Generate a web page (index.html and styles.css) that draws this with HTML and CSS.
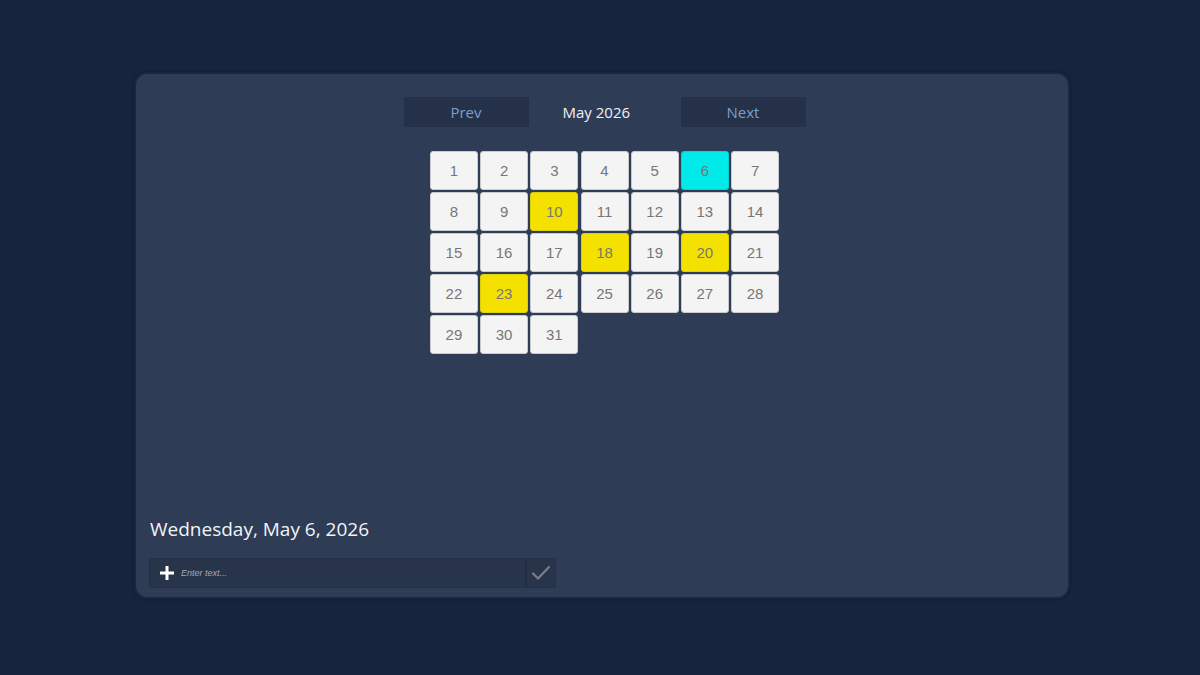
FILE: index.html
```html
<!DOCTYPE html>
<html>
<head>
<meta charset="utf-8">
<link rel="stylesheet" href="styles.css">
</head>
<body>
<div class="card">
  <div class="top">
    <div class="nav">
      <button class="nav-btn">Prev</button>
      <div class="title">May 2026</div>
      <button class="nav-btn">Next</button>
    </div>
    <div class="grid">
      <div class="cell">1</div><div class="cell">2</div><div class="cell">3</div><div class="cell">4</div><div class="cell">5</div><div class="cell today">6</div><div class="cell">7</div>
      <div class="cell">8</div><div class="cell">9</div><div class="cell mark">10</div><div class="cell">11</div><div class="cell">12</div><div class="cell">13</div><div class="cell">14</div>
      <div class="cell">15</div><div class="cell">16</div><div class="cell">17</div><div class="cell mark">18</div><div class="cell">19</div><div class="cell mark">20</div><div class="cell">21</div>
      <div class="cell">22</div><div class="cell mark">23</div><div class="cell">24</div><div class="cell">25</div><div class="cell">26</div><div class="cell">27</div><div class="cell">28</div>
      <div class="cell">29</div><div class="cell">30</div><div class="cell">31</div>
    </div>
  </div>
  <div class="bottom">
    <h2 class="date">Wednesday, May 6, 2026</h2>
    <div class="entry">
      <div class="field">
        <svg class="plus" width="16" height="16" viewBox="0 0 16 16"><path d="M8 1v14M1 8h14" stroke="#fff" stroke-width="3"/></svg>
        <span class="placeholder">Enter text...</span>
      </div>
      <div class="ok">
        <svg width="20" height="16" viewBox="0 0 20 16"><path d="M2 8.5l5 5L18 2" fill="none" stroke="#777c85" stroke-width="2.4" stroke-linecap="round" stroke-linejoin="round"/></svg>
      </div>
    </div>
  </div>
</div>
</body>
</html>
```
FILE: styles.css
```css
html, body {
  margin: 0;
  padding: 0;
  background: #17243d;
  width: 1200px;
  height: 675px;
  overflow: hidden;
  font-family: "Open Sans", "Liberation Sans", sans-serif;
}
.card {
  box-sizing: border-box;
  margin: 72px 0 0 134px;
  width: 936px;
  height: 527px;
  background: #2e3c55;
  border: 2px solid #1b2740;
  border-radius: 13px;
  box-shadow: 0 0 3px rgba(0,0,0,0.35);
  padding: 23px 12px 9px 13px;
  display: flex;
  flex-direction: column;
}
.top {
  display: flex;
  flex-direction: column;
  align-items: center;
  padding-left: 4px;
}
.nav {
  display: flex;
  align-items: center;
}
.nav-btn {
  width: 125px;
  height: 30px;
  border: none;
  border-radius: 2px;
  background: #243149;
  color: #7f9ec8;
  font-family: "Open Sans", "Liberation Sans", sans-serif;
  font-size: 15px;
  padding: 0;
}
.title {
  margin: 0 50px 0 34px;
  width: 68px;
  white-space: nowrap;
  color: #eef1f6;
  font-size: 15px;
  font-weight: 500;
}
.grid {
  margin-top: 24px;
  display: grid;
  grid-template-columns: repeat(7, 48px);
  grid-auto-rows: 39px;
  gap: 2px 2.2px;
}
.cell {
  box-sizing: border-box;
  background: #f4f4f4;
  border: 1px solid #c9cacd;
  border-radius: 3px;
  display: flex;
  align-items: center;
  justify-content: center;
  color: #777777;
  font-family: "Liberation Sans", Arial, sans-serif;
  font-size: 15px;
}
.cell.today { background: #00eaea; border-color: #00d4d8; }
.cell.mark { background: #f5e100; border-color: #e0cf00; }
.bottom {
  margin-top: auto;
}
.date {
  margin: 0 0 16px 1px;
  color: #f2f4f8;
  font-size: 19px;
  font-weight: 500;
  line-height: 26px;
}
.entry {
  display: flex;
  width: 407px;
  height: 30px;
}
.field {
  flex: 1;
  box-sizing: border-box;
  background: #273449;
  border: 1px solid #233046;
  border-radius: 2px 0 0 2px;
  display: flex;
  align-items: center;
  padding-left: 9px;
}
.plus { margin-right: 6px; }
.placeholder {
  color: #a3a9b4;
  font-style: italic;
  font-size: 9px;
  font-family: "Liberation Sans", Arial, sans-serif;
}
.ok {
  box-sizing: border-box;
  width: 30px;
  background: #273449;
  border: 1px solid #233046;
  border-left-color: #1f2b40;
  border-radius: 0 2px 2px 0;
  display: flex;
  align-items: center;
  justify-content: center;
}
```
